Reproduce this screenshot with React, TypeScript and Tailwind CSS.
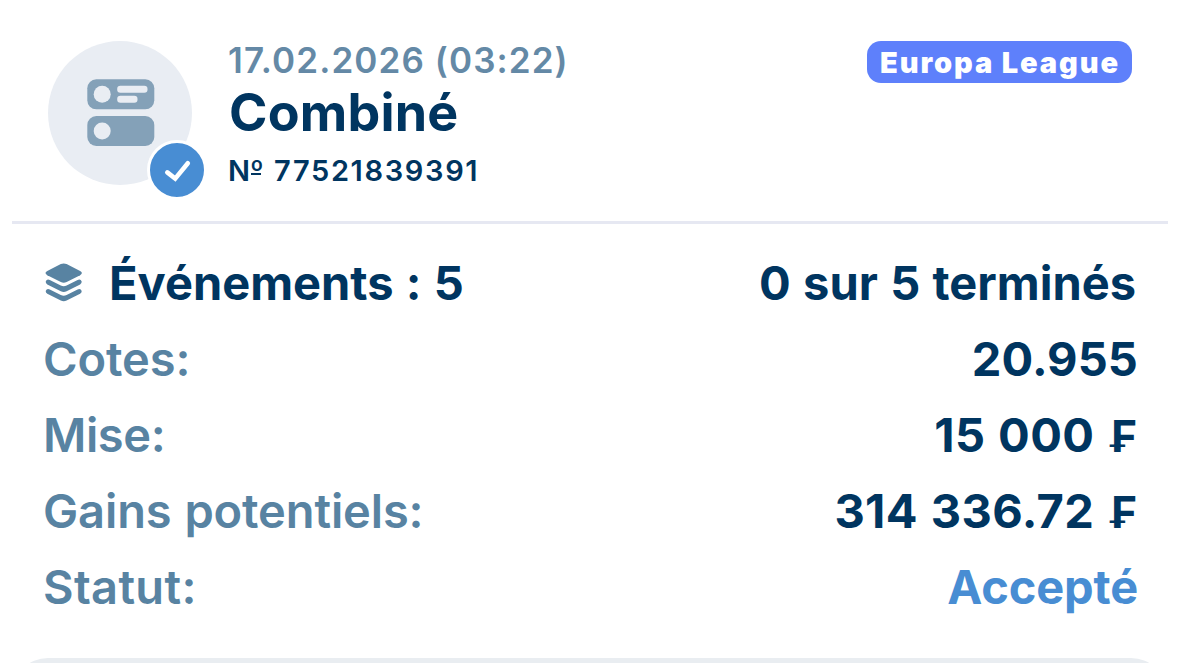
import React from 'react';

type Row = { label: string; value: string; currency?: boolean; valueClass: string; labelClass: string };

const rows: Row[] = [
    { label: 'Cotes:', value: '20.955', labelClass: 'tracking-[-0.1px]', valueClass: 'text-[#003560] -mr-px tracking-[0.1px]' },
    { label: 'Mise:', value: '15 000', currency: true, labelClass: 'tracking-[-0.4px]', valueClass: 'text-[#003560] tracking-[0.4px]' },
    { label: 'Gains potentiels:', value: '314 336.72', currency: true, labelClass: 'tracking-[-0.12px]', valueClass: 'text-[#003560] tracking-[0.4px]' },
    { label: 'Statut:', value: 'Accepté', labelClass: 'tracking-[0.35px]', valueClass: 'text-[#488dd3] -mr-px tracking-[-0.15px]' },
];

const CouponIcon: React.FC = () => (
    <svg className="ml-0.5" width="68" height="68" viewBox="0 0 68 68" fill="none">
        <rect x="0.3" y="0.3" width="67" height="30" rx="9" fill="#84a1b8" />
        <rect x="0.3" y="37" width="67" height="30" rx="9" fill="#84a1b8" />
        <circle cx="15.2" cy="15.2" r="8.5" fill="#e9edf3" />
        <circle cx="15.2" cy="52" r="8.5" fill="#e9edf3" />
        <rect x="30.2" y="6.8" width="30.3" height="7" rx="3.2" fill="#e9edf3" />
        <rect x="30.2" y="16.8" width="20.3" height="7" rx="3.2" fill="#e9edf3" />
    </svg>
);

const CheckIcon: React.FC = () => (
    <svg width="54" height="54" viewBox="0 0 54 54" fill="none">
        <path d="M17.3 29.4 L25.2 35.6 L37.8 20.3" stroke="#fff" strokeWidth="4.6" strokeLinecap="round" strokeLinejoin="miter" />
    </svg>
);

const LayersIcon: React.FC = () => (
    <svg width="38" height="40" viewBox="0 0 38 40" fill="#5883a2">
        <path d="M15.8 1.1Q18.7 0 21.6 1.1L35.1 7.9Q38.7 10 35.1 12.2L21.6 19.1Q18.7 20.4 15.8 19.1L2.3 12.2Q-1.3 10 2.3 7.9Z" />
        <path d="M0.7 18.6Q1.8 15.6 4.8 17L15.8 22.6Q18.7 23.9 21.6 22.6L32.6 17Q35.6 15.6 36.7 18.6Q36.9 20.4 35.1 21.4L21.6 28.2Q18.7 29.6 15.8 28.2L2.3 21.4Q0.5 20.4 0.7 18.6Z" />
        <path d="M0.7 28Q1.8 25 4.8 26.4L15.8 32Q18.7 33.3 21.6 32L32.6 26.4Q35.6 25 36.7 28Q36.9 29.8 35.1 30.8L21.6 37.6Q18.7 39 15.8 37.6L2.3 30.8Q0.5 29.8 0.7 28Z" />
    </svg>
);

const App: React.FC = () => {
    return (
        <div className="flex h-[663px] w-[1179px] flex-col overflow-hidden bg-white font-['Inter',sans-serif] whitespace-nowrap">
            <header className="mr-[11px] ml-3 flex h-[224px] shrink-0 items-start border-b-[3px] border-[#e6e8f2] pr-[36px] pl-9">
                <div className="relative mt-[41px] flex size-36 items-center justify-center rounded-full bg-[#e9edf3]">
                    <CouponIcon />
                    <div className="absolute top-[99px] left-[99px] rounded-full border-[3px] border-white bg-[#488dd3]">
                        <CheckIcon />
                    </div>
                </div>
                <div className="mt-10 ml-[36px] flex flex-col">
                    <span className="text-[35px] leading-[40px] font-[560] tracking-[1.1px] text-[#6489a6]">17.02.2026 (03:22)</span>
                    <span className="ml-px text-[52px] leading-[66px] font-bold tracking-[0.2px] text-[#003560]">Combiné</span>
                    <span className="text-[29px] leading-[50px] font-semibold text-[#003560]">
                        N
                        <span className="relative">
                            º
                            <span className="absolute bottom-[13px] left-px h-0.5 w-[10px] bg-[#003560]" />
                        </span>{' '}
                        <span className="ml-[3px] tracking-[1.65px]">77521839391</span>
                    </span>
                </div>
                <span className="mt-[41px] ml-auto h-[42px] w-[265px] rounded-[14px] bg-[#5e80fb] pl-[13px] text-[29px] leading-[43px] font-black tracking-[1.9px] text-white">
                    Europa League
                </span>
            </header>

            <main className="mt-[21px] flex flex-col pr-[42px] pl-[43px] text-[47px] leading-[76px] [word-spacing:1.2px]">
                <div className="flex h-[76px] items-center justify-between font-bold text-[#003560]">
                    <div className="flex items-center">
                        <div className="mr-[26px] ml-0.5">
                            <LayersIcon />
                        </div>
                        <span className="[font-feature-settings:'calt'_0]">Événements : 5</span>
                    </div>
                    <span className="mr-px">0 sur 5 terminés</span>
                </div>
                {rows.map((row) => (
                    <div key={row.label} className="flex h-[76px] justify-between">
                        <span className={`font-[560] text-[#5883a2] ${row.labelClass}`}>{row.label}</span>
                        <span className={`font-bold ${row.valueClass}`}>
                            {row.value}
                            {row.currency && <span className="ml-[4px] text-[44px] leading-none tracking-[0px]"> ₣</span>}
                        </span>
                    </div>
                ))}
            </main>

            <div className="mx-3 mt-[33px] h-20 shrink-0 rounded-[36px] bg-[#e9edf1]" />
        </div>
    );
};

export default App;
